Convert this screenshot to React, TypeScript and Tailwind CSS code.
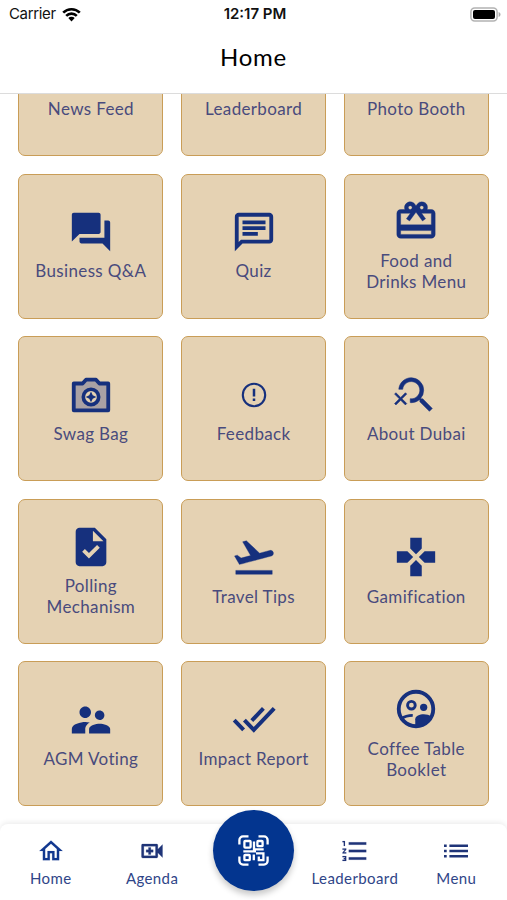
import type { ReactNode } from "react";
import {
  MdFlightTakeoff,
  MdFormatListNumbered,
  MdGamepad,
  MdOutlineChat,
  MdOutlineHome,
  MdOutlineRedeem,
  MdOutlineSearchOff,
  MdOutlineVideoCall,
  MdQuestionAnswer,
  MdSupervisorAccount,
  MdTask,
} from "react-icons/md";

////////////////////////////////////////////////////////////////////////////////

type Tile = {
  label: string;
  icon?: ReactNode;
};

const tiles: Tile[] = [
  { label: "News Feed" },
  { label: "Leaderboard" },
  { label: "Photo Booth" },
  { label: "Business Q&A", icon: <MdQuestionAnswer size={46} /> },
  { label: "Quiz", icon: <MdOutlineChat size={46} /> },
  {
    label: "Food and Drinks Menu",
    icon: <MdOutlineRedeem size={46} strokeWidth={0.2} />,
  },
  { label: "Swag Bag", icon: <CameraIcon /> },
  { label: "Feedback", icon: <AlertIcon /> },
  {
    label: "About Dubai",
    icon: <MdOutlineSearchOff size={46} strokeWidth={0.3} />,
  },
  { label: "Polling Mechanism", icon: <MdTask size={46} /> },
  {
    label: "Travel Tips",
    icon: <MdFlightTakeoff size={46} strokeWidth={0.2} />,
  },
  { label: "Gamification", icon: <MdGamepad size={46} /> },
  { label: "AGM Voting", icon: <MdSupervisorAccount size={46} /> },
  { label: "Impact Report", icon: <DoubleCheckIcon /> },
  { label: "Coffee Table Booklet", icon: <GroupCircleIcon /> },
];

// The home screen of the event app
export default function App() {
  return (
    <div className="relative flex h-[900px] w-[507px] flex-col overflow-hidden bg-white font-['Lato',sans-serif]">
      <StatusBar />
      <header className="flex h-[66px] shrink-0 justify-center border-b border-[#dcdcdc] pt-[13px]">
        <h1 className="text-[24px] leading-[31px] tracking-[0.7px] text-black">
          Home
        </h1>
      </header>

      <main className="h-[730px] shrink-0 overflow-hidden">
        <div className="-mt-[82.9px] grid grid-cols-[repeat(3,145px)] gap-x-[17.7px] gap-y-[17.6px] pl-[18.4px]">
          {tiles.map((tile) => (
            <TileCard key={tile.label} tile={tile} />
          ))}
        </div>
      </main>

      <TabBar />
    </div>
  );
}

////////////////////////////////////////////////////////////////////////////////

function StatusBar() {
  return (
    <div className="grid h-7 shrink-0 grid-cols-3 items-center pr-[6px] pl-[9px] font-['Inter',sans-serif] text-[15px] text-[#111]">
      <div className="flex items-center gap-[6px]">
        <span className="tracking-[-0.35px]">Carrier</span>
        <svg width="19" height="15" viewBox="0 0 19 15" fill="none">
          <path
            d="M1.2 5.6a11.8 11.8 0 0 1 16.6 0M4.2 8.8a7.5 7.5 0 0 1 10.6 0"
            stroke="#000"
            strokeWidth="2.6"
          />
          <path d="M9.5 14.4 6.3 11.1a4.6 4.6 0 0 1 6.4 0z" fill="#000" />
        </svg>
      </div>
      <span className="text-center font-semibold">12:17 PM</span>
      <svg
        className="justify-self-end"
        width="31"
        height="15"
        viewBox="0 0 31 15"
      >
        <rect
          x="0.9"
          y="0.9"
          width="26.2"
          height="13.2"
          rx="3.8"
          fill="#fff"
          stroke="#b3b3b3"
          strokeWidth="1.5"
        />
        <rect x="3" y="3" width="22" height="9" rx="2" fill="#000" />
        <path d="M28.6 5v5c1.3-.5 1.9-1.4 1.9-2.5s-.6-2-1.9-2.5z" fill="#aaa" />
      </svg>
    </div>
  );
}

function TileCard({ tile }: { tile: Tile }) {
  return (
    <div className="flex h-[145px] flex-col items-center justify-center gap-[5.5px] rounded-[7px] border border-[#c99d57] bg-[#e5d2b3] px-[14px] pb-[2px] text-[#16307d]">
      <div className="flex h-[46px] items-center justify-center [&_path[fill=none]]:stroke-none">
        {tile.icon}
      </div>
      <p className="text-center text-[17px] leading-[21px] tracking-[0.35px] text-[#494b7d]">
        {tile.label}
      </p>
    </div>
  );
}

function CameraIcon() {
  return (
    <svg width="46" height="46" viewBox="0 0 24 24" fill="none">
      <path
        d="M3 6h4.6l1.8-2h5.2l1.8 2H21v14H3z"
        fill="#a9a1a4"
        stroke="currentColor"
        strokeWidth="2"
        strokeLinejoin="round"
      />
      <circle
        cx="12"
        cy="13"
        r="4"
        fill="#e5d2b3"
        stroke="currentColor"
        strokeWidth="1.9"
      />
      <path
        d="m12 10.2.9 1.9 1.9.9-1.9.9-.9 1.9-.9-1.9-1.9-.9 1.9-.9z"
        fill="currentColor"
      />
    </svg>
  );
}

function AlertIcon() {
  return (
    <svg width="26" height="26" viewBox="0 0 26 26" fill="none">
      <circle
        cx="13"
        cy="13"
        r="11.2"
        stroke="currentColor"
        strokeWidth="2.1"
      />
      <path d="M13 6.8v7.6M13 16.6v2.4" stroke="currentColor" strokeWidth="2.5" />
    </svg>
  );
}

function DoubleCheckIcon() {
  return (
    <svg
      width="46"
      height="46"
      viewBox="0 0 46 46"
      fill="none"
      stroke="currentColor"
      strokeWidth="4"
    >
      <path d="M43.2 11.4 22.8 32.8l-9.4-9.6" />
      <path d="M12.6 32.8l-9.4-9.6M32.4 11.4 20.8 23.6" />
    </svg>
  );
}

// Two people inside a ring, the one in front is filled
function GroupCircleIcon() {
  return (
    <svg width="46" height="46" viewBox="0 0 24 24" fill="none">
      <circle cx="12" cy="12" r="9" stroke="currentColor" strokeWidth="2" />
      <circle cx="9.6" cy="10" r="2" stroke="currentColor" strokeWidth="1.5" />
      <circle cx="16" cy="11.1" r="1.9" fill="currentColor" />
      <path
        d="M4.4 17c1.3-1 3.5-1.7 5.9-1.7"
        stroke="currentColor"
        strokeWidth="1.5"
      />
      <path
        d="M11.6 21v-3.6c0-1.8 2.4-2.6 4.4-2.6 1.5 0 3 .4 3.9 1.2C18.3 19.2 15.4 21.3 11.6 21z"
        fill="currentColor"
      />
    </svg>
  );
}

////////////////////////////////////////////////////////////////////////////////

function TabBar() {
  return (
    <nav className="relative grid h-[76px] shrink-0 grid-cols-5 rounded-t-lg bg-white text-[#1f3478] shadow-[0_-2px_5px_rgba(0,0,0,0.07)]">
      <Tab
        label="Home"
        active
        icon={<MdOutlineHome size={28} strokeWidth={0.1} />}
      />
      <Tab
        label="Agenda"
        icon={<MdOutlineVideoCall size={28} strokeWidth={0.2} />}
      />
      <div />
      <Tab
        label="Leaderboard"
        icon={<MdFormatListNumbered size={30} strokeWidth={0.1} />}
      />
      <Tab label="Menu" icon={<MenuIcon />} />

      {/* Scan button sits on top of the bar */}
      <button className="absolute -top-[14px] left-[213px] flex size-[81px] items-center justify-center rounded-full bg-[#03358f] text-white shadow-[0_4px_6px_rgba(0,0,0,0.22)]">
        <QrIcon />
      </button>
    </nav>
  );
}

function Tab({
  label,
  icon,
  active,
}: {
  label: string;
  icon: ReactNode;
  active?: boolean;
}) {
  return (
    <div
      className={
        active
          ? "flex flex-col items-center pt-[12px] text-[#12388f]"
          : "flex flex-col items-center pt-[12px]"
      }
    >
      <div className="flex h-[30px] items-center [&_path[fill=none]]:stroke-none">
        {icon}
      </div>
      <span className="mt-[2px] text-[15px] leading-[20px] tracking-[0.4px] text-[#2f4588]">
        {label}
      </span>
    </div>
  );
}

function MenuIcon() {
  return (
    <svg width="24" height="16" viewBox="0 0 24 16" fill="currentColor">
      <path d="M0 1.5h2.7v2.6H0zM0 6.7h2.7v2.6H0zM0 11.9h2.7v2.6H0zM5.4 1.5H24v2.6H5.4zM5.4 6.7H24v2.6H5.4zM5.4 11.9H24v2.6H5.4z" />
    </svg>
  );
}

function QrIcon() {
  return (
    <svg
      width="31"
      height="31"
      viewBox="0 0 31 31"
      fill="none"
      stroke="currentColor"
      strokeWidth="2.3"
    >
      <path d="M1.4 9.5V5a3.6 3.6 0 0 1 3.6-3.6h5.5M20.5 1.4H26A3.6 3.6 0 0 1 29.6 5v4.5M29.6 21.5V26a3.6 3.6 0 0 1-3.6 3.6h-5.5M10.5 29.6H5A3.6 3.6 0 0 1 1.4 26v-4.5" />
      <rect x="6.4" y="6" width="6.2" height="6.6" rx="0.8" />
      <rect x="19.4" y="6" width="5.2" height="5.2" rx="0.8" />
      <rect x="6.4" y="20" width="5.4" height="5.2" rx="0.8" />
      <path d="M16 6.5v10M5.3 16.4H18M16 14.4h9.7M15.8 19.5v5.7M18 18.4h7.4v6.8h-4.6v-3.6" />
    </svg>
  );
}
